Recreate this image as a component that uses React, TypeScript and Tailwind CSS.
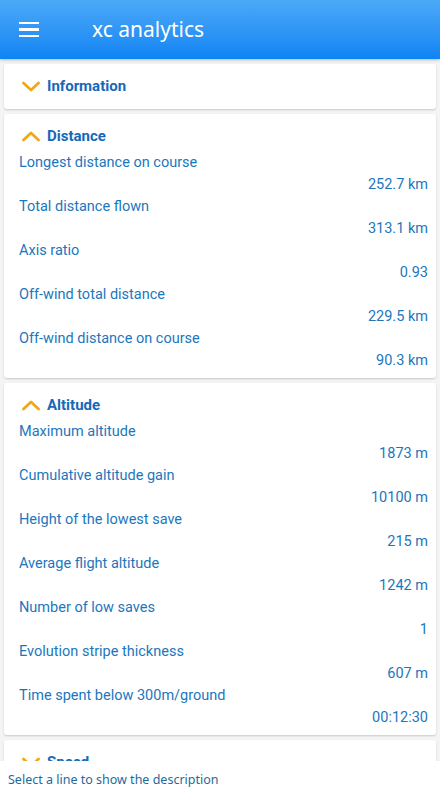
import React from 'react';

type Row = { label: string; value: string };

const distance: Row[] = [
  { label: 'Longest distance on course', value: '252.7 km' },
  { label: 'Total distance flown', value: '313.1 km' },
  { label: 'Axis ratio', value: '0.93' },
  { label: 'Off-wind total distance', value: '229.5 km' },
  { label: 'Off-wind distance on course', value: '90.3 km' },
];

const altitude: Row[] = [
  { label: 'Maximum altitude', value: '1873 m' },
  { label: 'Cumulative altitude gain', value: '10100 m' },
  { label: 'Height of the lowest save', value: '215 m' },
  { label: 'Average flight altitude', value: '1242 m' },
  { label: 'Number of low saves', value: '1' },
  { label: 'Evolution stripe thickness', value: '607 m' },
  { label: 'Time spent below 300m/ground', value: '00:12:30' },
];

function Chevron({ open }: { open: boolean }) {
  return (
    <svg width="18" height="12" viewBox="0 0 18 12" className="shrink-0">
      <path
        d={open ? 'M1.5 10 L9 3 L16.5 10' : 'M1.5 3 L9 10 L16.5 3'}
        fill="none"
        stroke="#f0a818"
        strokeWidth="2.8"
        strokeLinecap="round"
        strokeLinejoin="round"
      />
    </svg>
  );
}

function Section({ title, rows }: { title: string; rows?: Row[] }) {
  const open = !!rows;
  return (
    <div
      className={`mx-[4px] bg-white rounded-[3px] shadow-[0_1px_2px_rgba(0,0,0,0.18)] pt-[11px] ${open ? 'pb-[6px]' : 'pb-[12px]'}`}
    >
      <div className={`flex items-center gap-[8px] pl-[18px] h-[22px] ${open ? 'mb-[5px]' : ''}`}>
        <Chevron open={open} />
        <span className="text-[15px] font-bold text-[#1569b8] -ml-[1px]">{title}</span>
      </div>
      {rows?.map(r => (
        <div key={r.label} className="pl-[15px] pr-[8px] text-[14.5px] text-[#1b77bd]">
          <div className="h-[22px] leading-[22px]">{r.label}</div>
          <div className="h-[22px] leading-[22px] text-right">{r.value}</div>
        </div>
      ))}
    </div>
  );
}

export default function App() {
  return (
    <div className="h-[800px] w-[440px] flex flex-col bg-[#f4f4f4]" style={{ fontFamily: 'Roboto, "Noto Sans", sans-serif' }}>
      <header className="h-[59px] shrink-0 flex items-center bg-gradient-to-b from-[#4aa9f8] to-[#0c84f3] shadow-[0_1px_3px_rgba(0,0,0,0.25)]">
        <div className="w-[20px] ml-[19px] flex flex-col gap-[4px]">
          <span className="block h-[2.5px] bg-white" />
          <span className="block h-[2.5px] bg-white" />
          <span className="block h-[2.5px] bg-white" />
        </div>
        <span
          className="ml-[53px] text-[21px] text-white"
          style={{ fontFamily: '"Noto Sans", "Open Sans", sans-serif' }}
        >
          xc analytics
        </span>
      </header>
      <main className="flex-1 overflow-hidden flex flex-col gap-[5px] pt-[5px]">
        <Section title="Information" />
        <Section title="Distance" rows={distance} />
        <Section title="Altitude" rows={altitude} />
        <Section title="Speed" />
      </main>
      <footer
        className="h-[39px] shrink-0 bg-white flex items-center pl-[8px] text-[12.5px] text-[#1f6a9a]"
        style={{ fontFamily: '"Noto Sans", "Open Sans", sans-serif' }}
      >
        Select a line to show the description
      </footer>
    </div>
  );
}
